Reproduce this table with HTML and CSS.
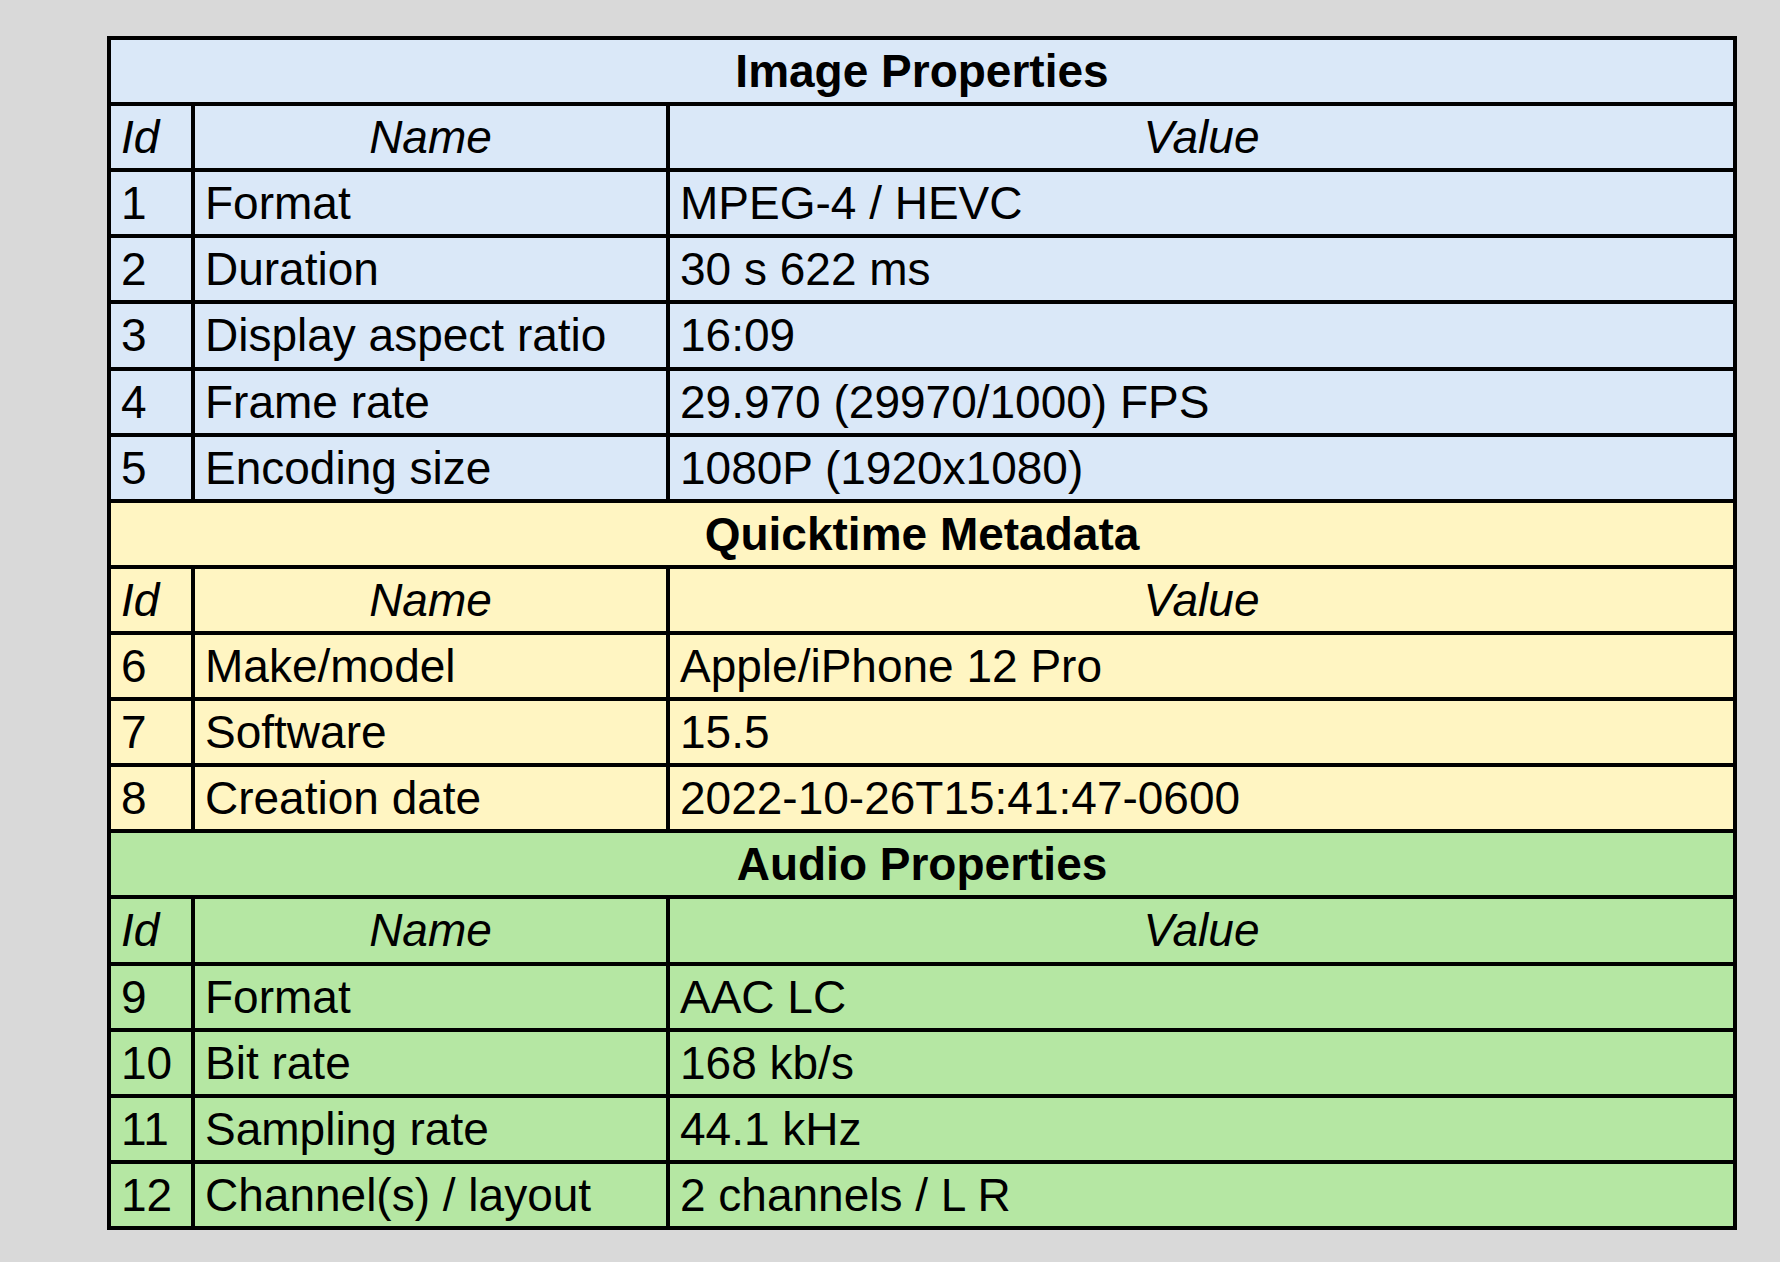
FILE: index.html
```html
<!DOCTYPE html>
<html lang="en">
<head>
<meta charset="utf-8">
<title>Media Properties</title>
<link rel="stylesheet" href="styles.css">
</head>
<body>
<div class="sheet">
  <div class="cell title blue">Image Properties</div>
  <div class="cell head blue">Id</div>
  <div class="cell head center blue">Name</div>
  <div class="cell head center blue">Value</div>
  <div class="cell blue">1</div><div class="cell blue">Format</div><div class="cell blue">MPEG-4 / HEVC</div>
  <div class="cell blue">2</div><div class="cell blue">Duration</div><div class="cell blue">30 s 622 ms</div>
  <div class="cell blue">3</div><div class="cell blue">Display aspect ratio</div><div class="cell blue">16:09</div>
  <div class="cell blue">4</div><div class="cell blue">Frame rate</div><div class="cell blue">29.970 (29970/1000) FPS</div>
  <div class="cell blue">5</div><div class="cell blue">Encoding size</div><div class="cell blue">1080P (1920x1080)</div>

  <div class="cell title yellow">Quicktime Metadata</div>
  <div class="cell head yellow">Id</div>
  <div class="cell head center yellow">Name</div>
  <div class="cell head center yellow">Value</div>
  <div class="cell yellow">6</div><div class="cell yellow">Make/model</div><div class="cell yellow">Apple/iPhone 12 Pro</div>
  <div class="cell yellow">7</div><div class="cell yellow">Software</div><div class="cell yellow">15.5</div>
  <div class="cell yellow">8</div><div class="cell yellow">Creation date</div><div class="cell yellow">2022-10-26T15:41:47-0600</div>

  <div class="cell title green">Audio Properties</div>
  <div class="cell head green">Id</div>
  <div class="cell head center green">Name</div>
  <div class="cell head center green">Value</div>
  <div class="cell green">9</div><div class="cell green">Format</div><div class="cell green">AAC LC</div>
  <div class="cell green">10</div><div class="cell green">Bit rate</div><div class="cell green">168 kb/s</div>
  <div class="cell green">11</div><div class="cell green">Sampling rate</div><div class="cell green">44.1 kHz</div>
  <div class="cell green">12</div><div class="cell green">Channel(s) / layout</div><div class="cell green">2 channels / L R</div>
</div>
</body>
</html>
```
FILE: styles.css
```css
html, body {
  margin: 0;
  background: #d9d9d9;
}
body {
  padding: 36px 0 0 107px;
  font-family: "Liberation Sans Narrow", "Liberation Sans", Arial, sans-serif;
  color: #000;
}
.sheet {
  box-sizing: border-box;
  width: 1630px;
  height: 1194px;
  padding: 4px;
  gap: 4px;
  background: #000;
  display: grid;
  grid-template-columns: 80px 471px 1fr;
  grid-template-rows: repeat(18, 1fr);
}
.cell {
  display: flex;
  align-items: center;
  padding: 0 0 0 10px;
  font-size: 46px;
  line-height: 1;
  white-space: nowrap;
  overflow: hidden;
}
.title {
  grid-column: 1 / -1;
  justify-content: center;
  font-weight: bold;
  padding: 0;
}
.head { font-style: italic; }
.center { justify-content: center; padding: 0; }
.blue { background: #dae8f8; }
.yellow { background: #fff5c2; }
.green { background: #b5e7a3; }
```
